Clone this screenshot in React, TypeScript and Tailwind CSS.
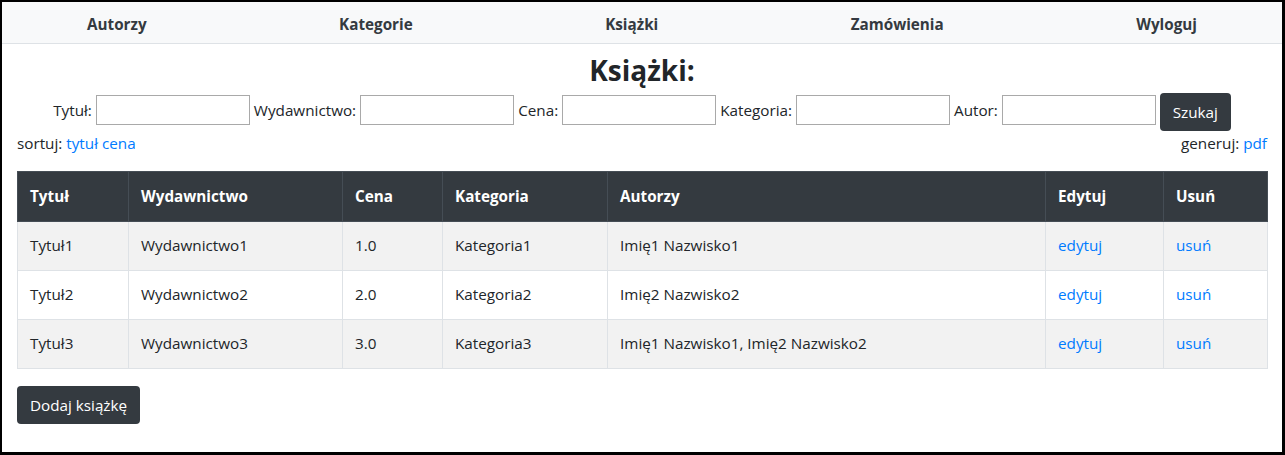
import React from "react";

const navItems = ["Autorzy", "Kategorie", "Książki", "Zamówienia", "Wyloguj"];

const searchFields = ["Tytuł:", "Wydawnictwo:", "Cena:", "Kategoria:", "Autor:"];

const columns = [
  { label: "Tytuł", width: 111 },
  { label: "Wydawnictwo", width: 214 },
  { label: "Cena", width: 100 },
  { label: "Kategoria", width: 165 },
  { label: "Autorzy", width: 438 },
  { label: "Edytuj", width: 118 },
  { label: "Usuń", width: 104 },
];

const books = [
  { title: "Tytuł1", publisher: "Wydawnictwo1", price: "1.0", category: "Kategoria1", authors: "Imię1 Nazwisko1" },
  { title: "Tytuł2", publisher: "Wydawnictwo2", price: "2.0", category: "Kategoria2", authors: "Imię2 Nazwisko2" },
  { title: "Tytuł3", publisher: "Wydawnictwo3", price: "3.0", category: "Kategoria3", authors: "Imię1 Nazwisko1, Imię2 Nazwisko2" },
];

export default function App() {
  return (
    <div className="w-[1285px] h-[455px] bg-white border-t-2 border-l-2 border-r-[3px] border-b-[3px] border-black font-['Open_Sans',sans-serif] text-[15.25px] text-[#212529] overflow-hidden">
      {/* Navbar */}
      <nav className="h-[42px] bg-[#f8f9fa] border-b border-[#dee2e6] flex items-center justify-between pl-[85px] pr-[85px] pt-[2px]">
        {navItems.map((item) => (
          <a key={item} className="font-bold text-[#343a40] leading-6">
            {item}
          </a>
        ))}
      </nav>

      <div className="px-[15px]">
        <h3 className="text-center font-bold text-[28px] leading-[1.2] mt-[10px] text-[#212529]">Książki:</h3>

        {/* Search form */}
        <form className="flex items-start justify-center mt-[5px] h-[38px]">
          {searchFields.map((f) => (
            <React.Fragment key={f}>
              <label className="mr-[4px] leading-6 mt-[5px]">{f}</label>
              <input type="text" className="w-[154px] h-[30px] mt-[2px] border border-[#a9a9a9] bg-white mr-[4px]" />
            </React.Fragment>
          ))}
          <button type="button" className="h-[38px] w-[71px] rounded bg-[#343a40] text-white leading-6">
            Szukaj
          </button>
        </form>

        <div className="flex justify-between leading-6">
          <div>
            sortuj: <a className="text-[#007bff]">tytuł</a> <a className="text-[#007bff]">cena</a>
          </div>
          <div>
            generuj: <a className="text-[#007bff]">pdf</a>
          </div>
        </div>

        {/* Table */}
        <table className="mt-4 w-[1250px] table-fixed border-collapse">
          <colgroup>
            {columns.map((c) => (
              <col key={c.label} style={{ width: c.width }} />
            ))}
          </colgroup>
          <thead>
            <tr className="h-[50px] bg-[#343a40] text-white">
              {columns.map((c) => (
                <th key={c.label} className="text-left font-bold px-3 border border-[#454d55]">
                  {c.label}
                </th>
              ))}
            </tr>
          </thead>
          <tbody>
            {books.map((b, i) => (
              <tr key={b.title} className={`h-[49px] ${i % 2 === 0 ? "bg-[#f2f2f2]" : "bg-white"}`}>
                <td className="px-3 border border-[#dee2e6]">{b.title}</td>
                <td className="px-3 border border-[#dee2e6]">{b.publisher}</td>
                <td className="px-3 border border-[#dee2e6]">{b.price}</td>
                <td className="px-3 border border-[#dee2e6]">{b.category}</td>
                <td className="px-3 border border-[#dee2e6]">{b.authors}</td>
                <td className="px-3 border border-[#dee2e6]">
                  <a className="text-[#007bff]">edytuj</a>
                </td>
                <td className="px-3 border border-[#dee2e6]">
                  <a className="text-[#007bff]">usuń</a>
                </td>
              </tr>
            ))}
          </tbody>
        </table>

        <button type="button" className="mt-[17px] h-[38px] w-[123px] rounded bg-[#343a40] text-white leading-6">
          Dodaj książkę
        </button>
      </div>
    </div>
  );
}
